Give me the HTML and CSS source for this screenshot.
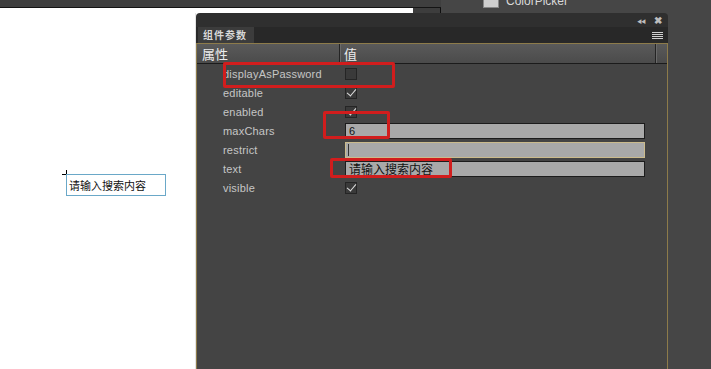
FILE: index.html
```html
<!DOCTYPE html>
<html lang="zh">
<head>
  <meta charset="UTF-8" />
  <title>组件参数</title>
  <link rel="stylesheet" href="styles.css">
</head>
<body>
  <div class="workspace">
    <div class="stage">
      <div class="stage-top"></div>
      <div class="stage-main">
        <div class="canvas">
          <div class="crosshair"></div>
          <div class="text-input">请输入搜索内容</div>
        </div>
        <div class="gutter"></div>
      </div>
    </div>
    <div class="side">
      <div class="side-item">
        <span class="side-icon"></span>
        <span>ColorPicker</span>
      </div>
    </div>
  </div>

  <div class="panel">
    <div class="panel-title">
      <span class="collapse">&#9664;&#9664;</span>
      <span class="close">&#10006;</span>
    </div>
    <div class="tabs">
      <div class="tab">组件参数</div>
      <div class="menu"><i></i><i></i><i></i><i></i></div>
    </div>
    <div class="grid">
      <div class="grid-head">
        <div class="col-name">属性</div>
        <div class="col-value">值</div>
        <div class="col-end"></div>
      </div>
      <div class="row"><div class="name">displayAsPassword</div><div class="value"><span class="check"></span></div></div>
      <div class="row"><div class="name">editable</div><div class="value"><span class="check on"></span></div></div>
      <div class="row"><div class="name">enabled</div><div class="value"><span class="check on"></span></div></div>
      <div class="row"><div class="name">maxChars</div><div class="value"><span class="field">6</span></div></div>
      <div class="row"><div class="name">restrict</div><div class="value"><span class="field focus"><i class="caret"></i></span></div></div>
      <div class="row"><div class="name">text</div><div class="value"><span class="field cjk">请输入搜索内容</span></div></div>
      <div class="row"><div class="name">visible</div><div class="value"><span class="check on"></span></div></div>
    </div>
  </div>

  <div class="mark mark-1"></div>
  <div class="mark mark-2"></div>
  <div class="mark mark-3"></div>
</body>
</html>
```

FILE: styles.css
```css
body {
  margin: 0;
  width: 711px;
  height: 369px;
  overflow: hidden;
  background: #454545;
  font-family: "Liberation Sans", Arial, "Noto Sans CJK SC", sans-serif;
  position: relative;
}
.workspace {
  display: flex;
  height: 369px;
}
.stage {
  width: 441px;
  display: flex;
  flex-direction: column;
}
.stage-top {
  height: 7px;
  background: #3f3f3f;
  border-bottom: 1px solid #141414;
}
.stage-main {
  flex: 1;
  display: flex;
}
.canvas {
  width: 413px;
  background: #fff;
  position: relative;
}
.gutter {
  flex: 1;
  background: #3d3d3d;
  border-right: 1px solid #0e0e0e;
}
.text-input {
  position: absolute;
  left: 66px;
  top: 166px;
  width: 100px;
  height: 22px;
  box-sizing: border-box;
  border: 1px solid #6aa8c8;
  padding: 3px 0 0 2px;
  font-size: 11px;
  line-height: 14px;
  font-family: "Noto Sans CJK SC", sans-serif;
  color: #111;
}
.crosshair {
  position: absolute;
  left: 62px;
  top: 162px;
  width: 9px;
  height: 9px;
}
.crosshair::before, .crosshair::after {
  content: "";
  position: absolute;
  background: #000;
}
.crosshair::before { left: 4px; top: 0; width: 1px; height: 9px; }
.crosshair::after { left: 0; top: 4px; width: 9px; height: 1px; }
.side {
  flex: 1;
  background: #464646;
}
.side-item {
  display: flex;
  align-items: center;
  gap: 7px;
  margin: -5px 0 0 42px;
  height: 12px;
  font-size: 12px;
  color: #d8d8d8;
}
.side-icon {
  width: 14px;
  height: 11px;
  background: #cfcfcf;
  border: 1px solid #888;
}

/* floating panel */
.panel {
  position: absolute;
  left: 196px;
  top: 13px;
  width: 472px;
  height: 370px;
  display: flex;
  flex-direction: column;
  box-shadow: -1px 0 0 #e4e4e4;
}
.panel-title {
  height: 14px;
  background: #2f2f2f;
  border-radius: 4px 4px 0 0;
  display: flex;
  justify-content: flex-end;
  align-items: center;
  gap: 9px;
  padding-right: 6px;
  color: #bdbdbd;
}
.collapse {
  font-size: 5px;
  letter-spacing: -1px;
}
.close {
  font-size: 10px;
  font-weight: bold;
}
.tabs {
  height: 16px;
  background: #282828;
  display: flex;
  align-items: flex-end;
  justify-content: space-between;
}
.tab {
  width: 56px;
  height: 16px;
  margin-left: 2px;
  background: #3c3c3c;
  color: #d8d8d8;
  font-family: "Noto Sans CJK SC", sans-serif;
  font-size: 10px;
  font-weight: bold;
  line-height: 16px;
  padding-left: 5px;
  box-sizing: border-box;
  letter-spacing: 1px;
}
.menu {
  display: flex;
  flex-direction: column;
  gap: 1px;
  margin: 0 5px 4px 0;
}
.menu i {
  display: block;
  width: 11px;
  height: 1px;
  background: #cfcfcf;
}
.grid {
  flex: 1;
  background: #444;
  border: 1px solid #8d7b4a;
  border-bottom: none;
}
.grid-head {
  height: 19px;
  display: flex;
  background: linear-gradient(#5a5a5a, #4b4b4b);
  border-bottom: 1px solid #1b1b1b;
  color: #ececec;
  font-family: "Noto Sans CJK SC", sans-serif;
  font-size: 13px;
  line-height: 19px;
}
.col-name {
  width: 143px;
  padding-left: 5px;
  box-sizing: border-box;
  border-right: 1px solid #242424;
}
.col-value {
  width: 311px;
  padding-left: 3px;
  border-left: 1px solid #6a6a6a;
  border-right: 1px solid #242424;
}
.col-end {
  flex: 1;
  border-left: 1px solid #6a6a6a;
}
.row {
  height: 19px;
  display: flex;
  align-items: center;
}
.name {
  width: 148px;
  padding-left: 26px;
  box-sizing: border-box;
  color: #c6c6c6;
  font-size: 11px;
  letter-spacing: 0.2px;
}
.value {
  flex: 1;
  display: flex;
  align-items: center;
}
.check {
  width: 10px;
  height: 10px;
  border: 1px solid #252525;
  background: #3a3a3a;
  position: relative;
}
.check.on::after {
  content: "";
  position: absolute;
  left: 3px;
  top: -1px;
  width: 4px;
  height: 8px;
  border: solid #e0e0e0;
  border-width: 0 1px 1px 0;
  transform: rotate(40deg);
}
.field {
  width: 295px;
  height: 14px;
  background: #a9a9a9;
  border: 1px solid #1c1c1c;
  font-size: 11px;
  line-height: 14px;
  padding-left: 3px;
  box-sizing: content-box;
  color: #111;
  position: relative;
}
.field.focus {
  border-color: #cbbb8d;
}
.caret {
  position: absolute;
  left: 2px;
  top: 1px;
  width: 1px;
  height: 12px;
  background: #333;
}
.field.cjk {
  font-family: "Noto Sans CJK SC", sans-serif;
  font-size: 12px;
}

/* red annotation boxes */
.mark {
  position: absolute;
  border: 3px solid #d11d1d;
  border-radius: 2px;
}
.mark-1 { left: 223px; top: 62px; width: 166px; height: 20px; }
.mark-2 { left: 323px; top: 111px; width: 61px; height: 22px; }
.mark-3 { left: 330px; top: 158px; width: 116px; height: 14px; }
```
